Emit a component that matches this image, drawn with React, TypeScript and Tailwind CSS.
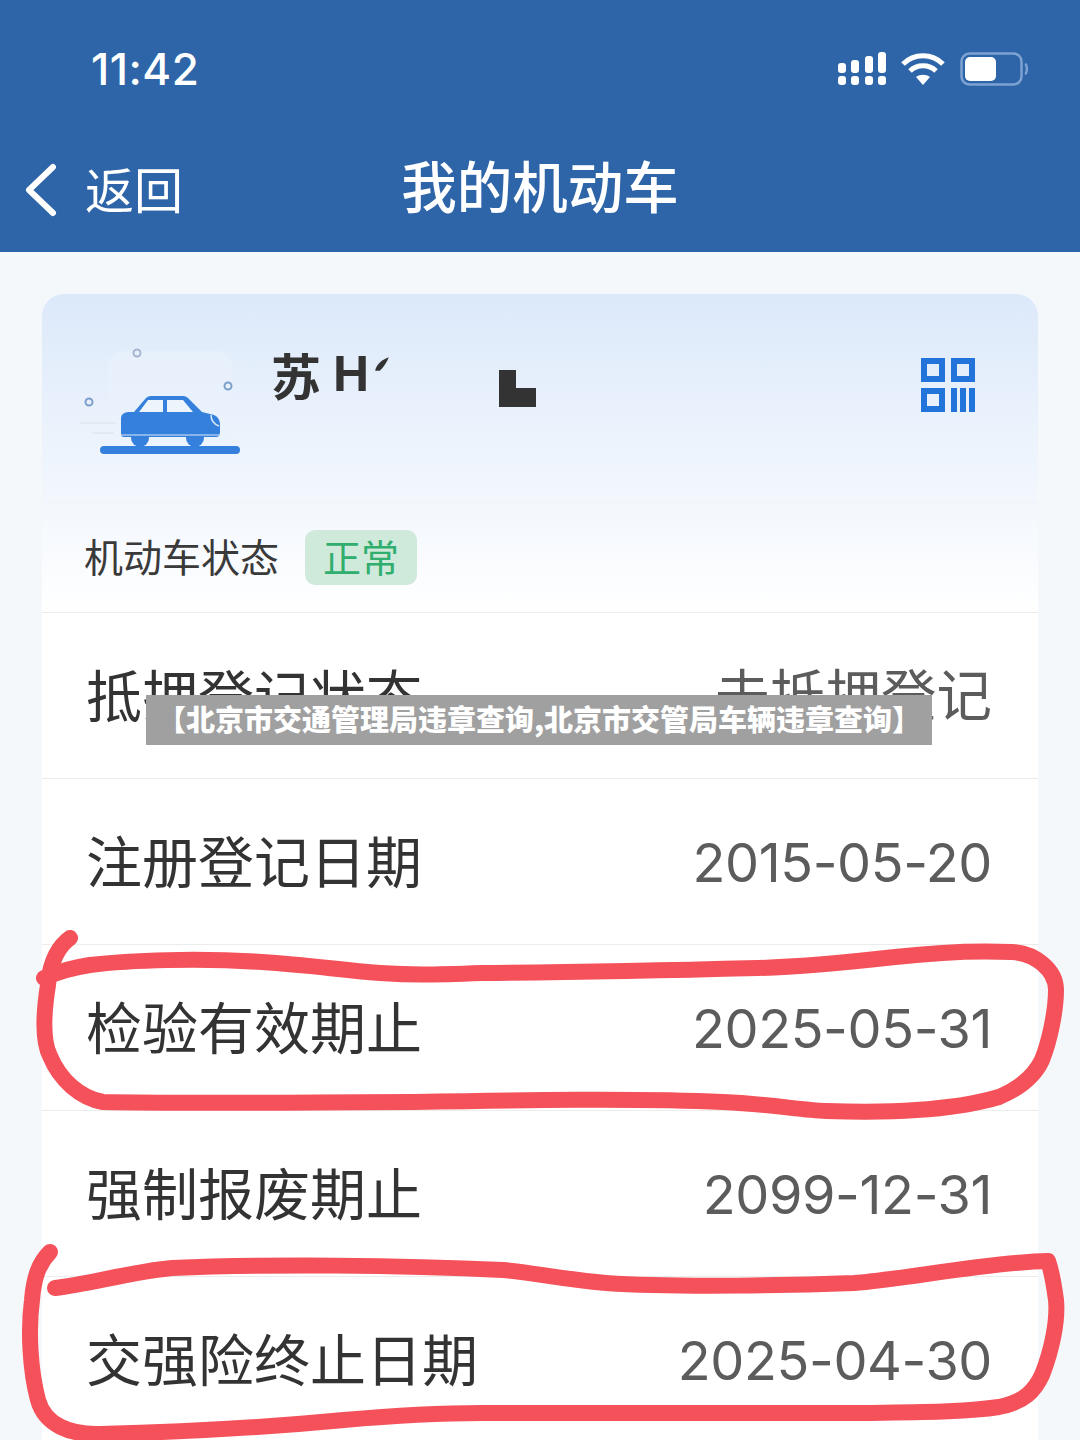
const CJK = "font-['Noto_Sans_CJK_SC','Noto_Sans',sans-serif]";

const ROWS = [
  { label: "抵押登记状态", value: "未抵押登记", isDate: false },
  { label: "注册登记日期", value: "2015-05-20", isDate: true },
  { label: "检验有效期止", value: "2025-05-31", isDate: true },
  { label: "强制报废期止", value: "2099-12-31", isDate: true },
  { label: "交强险终止日期", value: "2025-04-30", isDate: true },
];

function SignalIcon() {
  return (
    <svg width="48" height="36" viewBox="0 0 48 36" fill="#fff">
      <rect x="0" y="12" width="8" height="10" rx="3" />
      <rect x="0" y="25" width="8" height="9" rx="3" />
      <rect x="13" y="9" width="8" height="13" rx="3" />
      <rect x="13" y="25" width="8" height="9" rx="3" />
      <rect x="27" y="5" width="8" height="17" rx="3" />
      <rect x="27" y="25" width="8" height="9" rx="3" />
      <rect x="40" y="1" width="8" height="21" rx="3" />
      <rect x="40" y="25" width="8" height="9" rx="3" />
    </svg>
  );
}

function WifiIcon() {
  return (
    <svg width="46" height="34" viewBox="0 0 46 34" fill="none" stroke="#fff" strokeWidth="5">
      <path d="M3 12 C14 1 32 1 43 12" />
      <path d="M10 19 C17 12 29 12 36 19" />
      <path d="M23 33 L16 25 C20 22 26 22 30 25 Z" fill="#fff" stroke="none" />
    </svg>
  );
}

function BatteryIcon() {
  return (
    <svg width="68" height="34" viewBox="0 0 68 34" fill="none">
      <rect x="1.5" y="1.5" width="60" height="31" rx="8" stroke="#7ea3d2" strokeWidth="2.5" />
      <rect x="5" y="5" width="31" height="24" rx="5" fill="#fff" />
      <path d="M65 12 C67.5 13 67.5 21 65 22" stroke="#7ea3d2" strokeWidth="2.5" />
    </svg>
  );
}

function CarIcon() {
  return (
    <svg width="170" height="120" viewBox="0 0 170 120" fill="none" className="shrink-0">
      <rect x="28" y="12" width="124" height="90" rx="16" fill="#e9f1fb" opacity="0.6" />
      <path d="M0 84 H36 M12 94 H34" stroke="#e3e9f1" strokeWidth="2" />
      <circle cx="57" cy="14" r="3.5" stroke="#a6b4cf" strokeWidth="2" />
      <circle cx="148" cy="47" r="3.5" stroke="#7d9fcc" strokeWidth="2" />
      <circle cx="9" cy="63" r="3.5" stroke="#7d9fcc" strokeWidth="2" />
      <rect x="20" y="107" width="140" height="8" rx="4" fill="#3580dc" />
      <circle cx="60" cy="99" r="9" fill="#3580dc" />
      <circle cx="115" cy="99" r="9" fill="#3580dc" />
      <path
        d="M41 95 V79 Q41 74 48 73 L54 73 L66 59 Q68 57 71 57 H103 Q106 57 108 59 L122 73 L134 76 Q139 78 140 84 V93 Q140 98 136 98 H44 Q41 98 41 95 Z"
        fill="#3580dc"
      />
      <path d="M59 73 L68 61 H83 V73 Z M87 61 H103 L113 73 H87 Z" fill="#eef4fc" />
      <path d="M131 76 Q131 84 139 87" stroke="#dbe8f8" strokeWidth="1.5" />
      <path d="M41 96 H140" stroke="#dbe8f8" strokeWidth="1" />
    </svg>
  );
}

function QrIcon() {
  return (
    <svg width="54" height="54" viewBox="0 0 54 54" fill="#2273da">
      <path fillRule="evenodd" d="M0 0H24V24H0Z M6 6V18H18V6Z" />
      <path fillRule="evenodd" d="M30 0H54V24H30Z M36 6V18H48V6Z" />
      <path fillRule="evenodd" d="M0 30H24V54H0Z M6 36V48H18V36Z" />
      <rect x="30" y="30" width="6" height="24" />
      <rect x="39" y="30" width="6" height="24" />
      <rect x="48" y="30" width="6" height="24" />
    </svg>
  );
}

function Scribbles() {
  return (
    <svg
      width="1080"
      height="1440"
      viewBox="0 0 1080 1440"
      fill="none"
      stroke="#f4515a"
      strokeWidth="16"
      strokeLinecap="round"
      strokeLinejoin="round"
      className="absolute left-0 top-0 pointer-events-none"
    >
      <path d="M70 938 C60 945 50 960 48 985 C44 1010 42 1040 50 1056 C60 1080 80 1098 103 1102 C200 1104 320 1102 413 1102 C520 1100 640 1098 723 1102 C770 1104 800 1110 826 1111 C860 1112 890 1112 916 1110 C950 1108 975 1104 999 1097 C1020 1088 1035 1075 1042 1060 C1050 1040 1056 1010 1056 990 C1056 970 1035 953 1012 952 C970 950 930 953 895 957 C850 962 800 967 758 968 C680 970 600 972 482 973 C430 975 410 975 380 973 C340 970 310 965 262 962 C200 958 130 960 90 965 C70 968 55 973 44 978" />
      <path d="M50 1252 C40 1262 34 1275 32 1300 C28 1330 30 1370 38 1400 C45 1425 70 1435 100 1434 C180 1432 260 1428 344 1420 C400 1415 440 1413 482 1413 C600 1412 740 1414 861 1413 C920 1412 965 1412 999 1407 C1025 1402 1035 1390 1042 1375 C1052 1350 1058 1320 1056 1300 C1054 1285 1052 1272 1048 1261 C990 1262 900 1280 854 1283 C800 1285 680 1288 606 1283 C560 1279 530 1272 503 1270 C400 1265 270 1264 172 1268 C130 1272 90 1284 55 1288" />
    </svg>
  );
}

export default function App() {
  return (
    <div className={`relative w-[1080px] h-[1440px] overflow-hidden bg-[#f5f8fa] ${CJK}`}>
      {/* Top bar */}
      <header className="h-[252px] bg-[#2d65a8] text-white">
        <div className="h-[138px] flex items-center justify-between pl-[91px] pr-[52px]">
          <span className="text-[44px] font-medium font-['Inter',sans-serif] tracking-[0.5px] leading-none">11:42</span>
          <div className="flex items-center gap-[14px]">
            <SignalIcon />
            <WifiIcon />
            <BatteryIcon />
          </div>
        </div>
        <div className="relative flex items-center justify-center h-[104px]">
          <div className="absolute left-[24px] flex items-center gap-[27px]">
            <svg width="34" height="54" viewBox="0 0 34 54" fill="none" stroke="#fff" strokeWidth="6" strokeLinecap="round" strokeLinejoin="round">
              <path d="M29 4 L5 27 L29 50" />
            </svg>
            <span className="text-[49px] font-normal leading-none -mt-[6px]">返回</span>
          </div>
          <h1 className="text-[55.5px] font-medium leading-none -mt-[10px]">我的机动车</h1>
        </div>
      </header>

      {/* Vehicle card */}
      <main className="mx-[42px] mt-[42px] rounded-t-[22px] bg-white overflow-hidden">
        <div className="h-[318px] bg-gradient-to-b from-[#dce9fa] to-[#ffffff]">
          <div className="h-[209px] flex border-b border-[#f0f3f7] pl-[38px] pr-[63px] pt-[45px]">
            <CarIcon />
            <div className="ml-[21px] mt-[10px] flex items-start text-[#333]">
              <span className="text-[50px] font-bold leading-none">苏</span>
              <span className="ml-[12px] text-[50px] font-bold leading-none font-['Liberation_Sans',sans-serif]">H</span>
              <svg width="16" height="16" viewBox="0 0 14 14" fill="#333" className="ml-[5px] mt-[7px]">
                <path d="M1 13 C2 7 7 3 13 1 C11 6 8 10 5 13 Z" />
              </svg>
              <div className="ml-[109px] mt-[21px] w-[37px] h-[37px] flex flex-col justify-between">
                <div className="w-[17px] h-[18px] bg-[#333]" />
                <div className="w-[37px] h-[19px] bg-[#333]" />
              </div>
            </div>
            <div className="ml-auto mt-[19px]">
              <QrIcon />
            </div>
          </div>
          <div className="h-[109px] flex items-center pl-[42px]">
            <span className="text-[39px] text-[#3a3a3a] leading-none -mt-[4px]">机动车状态</span>
            <span className="ml-[26px] w-[112px] h-[55px] flex items-center justify-center rounded-[10px] bg-[#cfe9db] text-[#2fae6e] text-[38px] leading-none">
              <span className="-mt-[4px]">正常</span>
            </span>
          </div>
        </div>

        {ROWS.map((row) => (
          <div
            key={row.label}
            className="h-[166px] flex items-center justify-between border-t border-[#ececec] pl-[44px] pr-[46px]"
          >
            <span className="text-[56px] text-[#333] leading-none -mt-[6px]">{row.label}</span>
            {row.isDate ? (
              <span className="text-[54px] tracking-[-0.4px] text-[#5c5c5c] leading-none mt-[3px] font-['Inter',sans-serif]">
                {row.value}
              </span>
            ) : (
              <span className="text-[55.5px] text-[#5c5c5c] leading-none -mt-[5px]">{row.value}</span>
            )}
          </div>
        ))}
      </main>

      <Scribbles />

      {/* Watermark banner */}
      <div className="absolute left-[146px] top-[695px] w-[786px] h-[50px] flex items-center justify-center bg-[#a0a0a0] text-white text-[29px] font-black whitespace-nowrap">
        <span className="-mt-[2px]">【北京市交通管理局违章查询,北京市交管局车辆违章查询】</span>
      </div>
    </div>
  );
}
